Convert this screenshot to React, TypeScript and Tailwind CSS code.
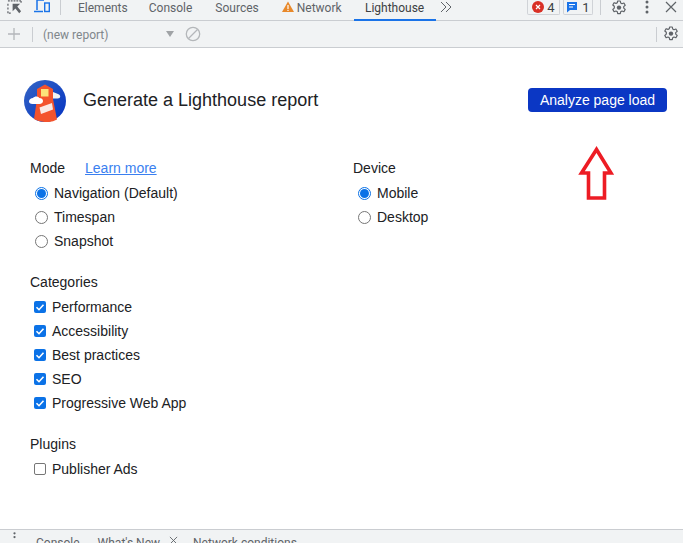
import React from 'react';

const GearIcon = ({ className }: { className: string }) => (
  <svg viewBox="0 0 16 16" className={className} fill="none">
    <path
      d="M6.700 1h2.600l.4 2 1.300.7 1.900-.7 1.300 2.300-1.500 1.300v1.500l1.500 1.300-1.300 2.300-1.900-.7-1.300.7-.4 2H6.700l-.4-2-1.300-.7-1.900.7-1.300-2.300 1.500-1.300V6.300L1.800 5l1.300-2.300 1.900.7 1.300-.7z"
      stroke="#5f6368"
      strokeWidth="1.200"
      strokeLinejoin="round"
    />
    <circle cx="8" cy="7.600" r="2.200" fill="#5f6368" />
  </svg>
);

const Logo = () => (
  <svg viewBox="0 0 42 42" className="w-[42px] h-[42px] shrink-0">
    <defs>
      <linearGradient id="logoBg" x1="0" y1="0" x2="1" y2="1">
        <stop offset="0" stopColor="#3565c4" />
        <stop offset="1" stopColor="#0433c2" />
      </linearGradient>
    </defs>
    <circle cx="21" cy="21" r="21" fill="url(#logoBg)" />
    <path d="M13 19h16l4 20.500A21 21 0 0 1 21 42a21 21 0 0 1-11-3z" fill="#f4532c" />
    <path d="M13 19V9l8-4.500L29 9v10z" fill="#f4532c" />
    <rect x="17" y="9" width="7.500" height="7.500" fill="#fce27a" />
    <path d="M15.500 27.500L28 23l1 6.500-12 4.500z" fill="#fbe9e4" />
    <path d="M5 21.500c0-2.300 2-3.500 4-3.500 1.500-2 5-2 6.300 0 2.200 0 3.700 1.300 3.700 3 0 1.600-1.300 3-3.500 3H8.500C6.300 24 5 23 5 21.500z" fill="#fff" />
    <path d="M29 12l5 2c1.500.6 2.200 1.500 2.200 2.500 0 1.200-1 2-2.500 2H29z" fill="#f1f3f4" />
  </svg>
);

const Radio = ({ label, checked }: { label: string; checked?: boolean }) => (
  <div className="h-6 flex items-center pl-[5px]">
    {checked ? (
      <span className="w-[13px] h-[13px] rounded-full border border-[#0b72e7] flex items-center justify-center shrink-0">
        <span className="w-[9px] h-[9px] rounded-full bg-[#0b72e7]" />
      </span>
    ) : (
      <span className="w-[13px] h-[13px] rounded-full border border-[#767676] shrink-0" />
    )}
    <span className="ml-[6px] text-[14px] text-[#202124]">{label}</span>
  </div>
);

const Check = ({ label, checked = true }: { label: string; checked?: boolean }) => (
  <div className="h-6 flex items-center pl-[4px]">
    {checked ? (
      <span className="w-3 h-3 rounded-[2px] bg-[#0b72e7] flex items-center justify-center shrink-0">
        <svg viewBox="0 0 12 12" className="w-3 h-3">
          <path d="M2.500 6.200l2.500 2.500 4.500-5" stroke="#fff" strokeWidth="1.600" fill="none" />
        </svg>
      </span>
    ) : (
      <span className="w-3 h-3 rounded-[2px] border border-[#767676] shrink-0" />
    )}
    <span className="ml-[6px] text-[14px] text-[#202124]">{label}</span>
  </div>
);

const App = () => {
  return (
    <div className="relative w-[683px] h-[543px] overflow-hidden bg-white flex flex-col font-['Liberation_Sans',sans-serif]">
      {/* top tab strip */}
      <div className="h-[21px] shrink-0 bg-[#f1f3f4] border-b border-[#cacdd1] flex items-start font-['Roboto',sans-serif] text-[12px] leading-[16px] text-[#5f6368]">
        <svg viewBox="0 0 16 16" className="w-[15px] h-[15px] ml-[7px] shrink-0" fill="none">
          <path d="M1 1h14M1 4v2M1 8v2M1 12v2h3M15 1v3" stroke="#5f6368" strokeWidth="1.300" strokeDasharray="2 1" />
          <path d="M6 4h8l-3 3 4 5-2 2-4-5-3 3z" fill="#5f6368" />
        </svg>
        <svg viewBox="0 0 16 16" className="w-4 h-4 ml-[12px] -mt-[1px] shrink-0" fill="none">
          <path d="M3 1h7M3 1v10M0 12.500h9" stroke="#1a73e8" strokeWidth="1.500" />
          <rect x="10.700" y="4" width="4.600" height="8.500" stroke="#1a73e8" strokeWidth="1.400" />
        </svg>
        <span className="w-px h-[15px] bg-[#cacdd1] ml-[10px] shrink-0" />
        <span className="ml-[17px]">Elements</span>
        <span className="ml-[21px]">Console</span>
        <span className="ml-[23px]">Sources</span>
        <svg viewBox="0 0 12 12" className="w-3 h-3 ml-[23px] mt-[1px] shrink-0">
          <path d="M6 .5L12 11H0z" fill="#e8892b" />
          <rect x="5.400" y="4" width="1.200" height="4" fill="#fff" />
          <rect x="5.400" y="8.800" width="1.200" height="1.200" fill="#fff" />
        </svg>
        <span className="ml-[3px]">Network</span>
        <div className="ml-[12px] w-[82px] h-[21px] border-b-2 border-[#1a73e8] text-center text-[#3c4043] shrink-0">Lighthouse</div>
        <svg viewBox="0 0 12 12" className="w-3 h-3 ml-[4px] mt-[1px] shrink-0" fill="none">
          <path d="M1 1l5 5-5 5M6 1l5 5-5 5" stroke="#5f6368" strokeWidth="1" />
        </svg>
        <div className="ml-auto flex items-start">
          <div className="w-[33px] h-[15px] border border-t-0 border-[#d0d3d7] rounded-b-[2px] flex items-center justify-center gap-[3px] text-[13px] leading-none">
            <span className="w-3 h-3 rounded-full bg-[#d93025] flex items-center justify-center">
              <svg viewBox="0 0 8 8" className="w-2 h-2">
                <path d="M2 2l4 4M6 2L2 6" stroke="#fff" strokeWidth="1.200" />
              </svg>
            </span>
            <span className="text-[#3c4043]">4</span>
          </div>
          <div className="ml-[3px] w-[30px] h-[15px] border border-t-0 border-[#d0d3d7] rounded-b-[2px] flex items-center justify-center gap-[4px] text-[13px] leading-none">
            <svg viewBox="0 0 12 12" className="w-3 h-3">
              <path d="M1 1h10v8H4l-3 2.500z" fill="#1a73e8" />
              <path d="M3 3.500h6M3 6h4" stroke="#fff" strokeWidth="1" />
            </svg>
            <span className="text-[#3c4043]">1</span>
          </div>
          <span className="w-px h-[15px] bg-[#cacdd1] ml-[7px]" />
          <GearIcon className="w-4 h-4 ml-[10px]" />
          <svg viewBox="0 0 4 14" className="w-1 h-[14px] ml-[18px]">
            <circle cx="2" cy="2" r="1.500" fill="#5f6368" />
            <circle cx="2" cy="7" r="1.500" fill="#5f6368" />
            <circle cx="2" cy="12" r="1.500" fill="#5f6368" />
          </svg>
          <svg viewBox="0 0 12 12" className="w-3 h-3 ml-[16px] mr-[6px] mt-px">
            <path d="M1 1l10 10M11 1L1 11" stroke="#5f6368" strokeWidth="1.200" />
          </svg>
        </div>
      </div>

      {/* report toolbar */}
      <div className="h-[27px] shrink-0 bg-[#f1f3f4] border-b border-[#cacdd1] flex items-center font-['Roboto',sans-serif] text-[12px] text-[#80868b]">
        <svg viewBox="0 0 12 12" className="w-3 h-3 ml-2 shrink-0">
          <path d="M6 0v12M0 6h12" stroke="#b4b7ba" strokeWidth="1.300" />
        </svg>
        <span className="w-px h-[15px] bg-[#cacdd1] ml-3 shrink-0" />
        <span className="ml-[10px] mt-[2px] w-[123px]">(new report)</span>
        <span className="w-0 h-0 border-x-[4px] border-x-transparent border-t-[6px] border-t-[#a0a3a6] shrink-0" />
        <svg viewBox="0 0 16 16" className="w-4 h-4 ml-[11px] shrink-0" fill="none">
          <circle cx="8" cy="8" r="6.700" stroke="#b4b7ba" strokeWidth="1.300" />
          <path d="M3.500 12.500l9-9" stroke="#b4b7ba" strokeWidth="1.300" />
        </svg>
        <span className="w-px h-[15px] bg-[#cacdd1] ml-auto shrink-0" />
        <GearIcon className="w-4 h-4 ml-[6px] mr-[4px]" />
      </div>

      {/* main panel */}
      <div className="flex-1 min-h-0">
        <div className="flex items-center pt-[32px] pl-[24px] pr-[16px]">
          <Logo />
          <h1 className="ml-[17px] mb-[2px] text-[18px] text-[#202124]">Generate a Lighthouse report</h1>
          <button className="ml-auto mb-[2px] w-[139px] h-[24px] rounded-[4px] bg-[#0b37c4] text-white text-[14px]">
            Analyze page load
          </button>
        </div>

        <div className="flex pl-[30px] pt-[34px]">
          <div className="w-[323px]">
            <div className="h-[24px] flex items-center text-[14px] text-[#202124]">
              Mode
              <a href="#" className="ml-[20px] text-[#3a7ff0] underline">Learn more</a>
            </div>
            <div className="mt-px">
              <Radio label="Navigation (Default)" checked />
              <Radio label="Timespan" />
              <Radio label="Snapshot" />
            </div>
            <div className="h-[24px] mt-[17px] flex items-center text-[14px] text-[#202124]">Categories</div>
            <div className="mt-px">
              <Check label="Performance" />
              <Check label="Accessibility" />
              <Check label="Best practices" />
              <Check label="SEO" />
              <Check label="Progressive Web App" />
            </div>
            <div className="h-[24px] mt-[17px] flex items-center text-[14px] text-[#202124]">Plugins</div>
            <div className="mt-px">
              <Check label="Publisher Ads" checked={false} />
            </div>
          </div>
          <div>
            <div className="h-[24px] flex items-center text-[14px] text-[#202124]">Device</div>
            <div className="mt-px">
              <Radio label="Mobile" checked />
              <Radio label="Desktop" />
            </div>
          </div>
        </div>
      </div>

      {/* drawer tabs, cut off by the window */}
      <div className="h-[14px] shrink-0 bg-[#f1f3f4] border-t border-[#cacdd1] flex items-start font-['Roboto',sans-serif] text-[12px] leading-[16px] text-[#5f6368] whitespace-nowrap overflow-hidden">
        <svg viewBox="0 0 4 14" className="w-[3px] h-[12px] ml-[13px] mt-[1px] shrink-0">
          <circle cx="2" cy="2" r="1.500" fill="#5f6368" />
          <circle cx="2" cy="7" r="1.500" fill="#5f6368" />
        </svg>
        <span className="ml-[20px] mt-[5px]">Console</span>
        <span className="ml-[18px] mt-[5px]">What's New</span>
        <svg viewBox="0 0 10 10" className="w-[9px] h-[9px] ml-[9px] mt-[6px] shrink-0">
          <path d="M1 1l8 8M9 1L1 9" stroke="#5f6368" strokeWidth="1" />
        </svg>
        <span className="ml-[15px] mt-[5px]">Network conditions</span>
      </div>

      {/* red annotation arrow */}
      <svg viewBox="0 0 36 56" className="absolute left-[578px] top-[146px] w-[36px] h-[56px]" fill="none">
        <path d="M18.500 3.500L3.500 27H10.500v25h16V27H33z" stroke="#ed1c24" strokeWidth="3.600" />
      </svg>
    </div>
  );
};

export default App;
